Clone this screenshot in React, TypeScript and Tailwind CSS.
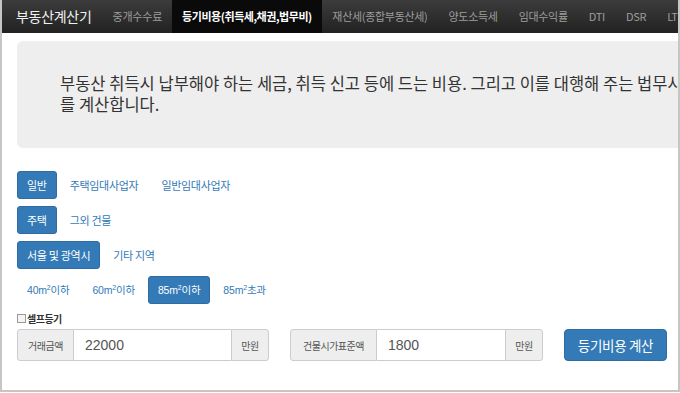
const KR = "font-['Noto_Sans_CJK_KR','Noto_Sans',sans-serif]";

function NavBar() {
  const items = ["재산세(종합부동산세)", "양도소득세", "임대수익률", "DTI", "DSR", "LTV"];
  return (
    <nav className="h-[33px] flex items-stretch bg-gradient-to-b from-[#3c3c3c] to-[#222] text-[#9d9d9d] whitespace-nowrap overflow-hidden">
      <div className="pl-[14px] pr-[11px] flex items-center text-[14px] text-[#f0f0f0] tracking-[-0.3px]">부동산계산기</div>
      <div className="px-[10px] flex items-center text-[11px] tracking-[-0.2px]">중개수수료</div>
      <div className="px-[10px] flex items-center text-[11px] text-white font-bold tracking-[-0.45px] bg-[#0a0a0a]">
        등기비용(취득세,채권,법무비)
      </div>
      {items.map((t) => (
        <div key={t} className="px-[10.5px] flex items-center text-[11px] tracking-[-0.3px]">
          {t}
        </div>
      ))}
    </nav>
  );
}

function Btn({ active, children }: { active?: boolean; children: React.ReactNode }) {
  return (
    <div
      className={
        "h-[28px] px-[9px] flex items-center rounded-[3px] text-[11px] tracking-[-0.3px] border " +
        (active ? "bg-[#337ab7] border-[#2e6da4] text-white" : "border-transparent text-[#337ab7]")
      }
    >
      {children}
    </div>
  );
}

function Row({ children }: { children: React.ReactNode }) {
  return <div className="flex gap-[3px]">{children}</div>;
}

function M2({ n, s }: { n: string; s: string }) {
  return (
    <span className="font-['Liberation_Sans',sans-serif] text-[10.5px] tracking-[-0.2px]">
      {n}m<sup className="text-[7px]">2</sup>
      <span className={KR}>{s}</span>
    </span>
  );
}

function InputGroup({ label, value, labelW, inputW }: { label: string; value: string; labelW: string; inputW: string }) {
  return (
    <div className="flex h-[32px]">
      <div className={labelW + " flex items-center justify-center bg-[#eee] border border-[#ccc] rounded-l-[3px] text-[10px] tracking-[-0.5px] text-[#555]"}>
        {label}
      </div>
      <div className={inputW + " flex items-center pl-[11px] border-y border-[#ccc] bg-white font-['Liberation_Sans',sans-serif] text-[14px] text-[#555]"}>
        {value}
      </div>
      <div className="w-[38px] flex items-center justify-center bg-[#eee] border border-[#ccc] rounded-r-[3px] text-[10px] tracking-[-0.5px] text-[#555]">
        만원
      </div>
    </div>
  );
}

export default function App() {
  return (
    <div className={KR + " w-[680px] h-[393px] bg-white overflow-hidden"}>
      <div className="w-[680px] h-[392px] border-2 border-t-0 border-[#c6c6c6] overflow-hidden">
        <NavBar />
        <div className="pl-[15px]">
          <div className="mt-[8px] w-[720px] h-[107px] bg-[#eee] rounded-[6px] pl-[43px] pt-[32px] text-[16.5px] leading-[21px] text-[#333] whitespace-nowrap overflow-hidden">
            <p>부동산 취득시 납부해야 하는 세금, 취득 신고 등에 드는 비용. 그리고 이를 대행해 주는 법무사의</p>
            <p>를 계산합니다.</p>
          </div>

          <div className="mt-[23px] flex flex-col gap-[7px]">
            <Row>
              <Btn active>일반</Btn>
              <Btn>주택임대사업자</Btn>
              <Btn>일반임대사업자</Btn>
            </Row>
            <Row>
              <Btn active>주택</Btn>
              <Btn>그외 건물</Btn>
            </Row>
            <Row>
              <Btn active>서울 및 광역시</Btn>
              <Btn>기타 지역</Btn>
            </Row>
            <Row>
              <Btn><M2 n="40" s="이하" /></Btn>
              <Btn><M2 n="60" s="이하" /></Btn>
              <Btn active><M2 n="85" s="이하" /></Btn>
              <Btn><M2 n="85" s="초과" /></Btn>
            </Row>
          </div>

          <div className="mt-[8px] flex items-center h-[12px] text-[10px] font-bold tracking-[-0.5px] text-[#333]">
            <span className="w-[9px] h-[9px] border border-[#999] bg-[#f4f4f4] mr-[1px]" />
            셀프등기
          </div>

          <div className="mt-[5px] flex items-center gap-[21px]">
            <InputGroup label="거래금액" value="22000" labelW="w-[57px]" inputW="w-[157px]" />
            <InputGroup label="건물시가표준액" value="1800" labelW="w-[87px]" inputW="w-[128px]" />
            <div className="w-[103px] h-[32px] flex items-center justify-center bg-[#337ab7] border border-[#2e6da4] rounded-[4px] text-white text-[13.5px] tracking-[-0.3px]">
              등기비용 계산
            </div>
          </div>
        </div>
      </div>
    </div>
  );
}
